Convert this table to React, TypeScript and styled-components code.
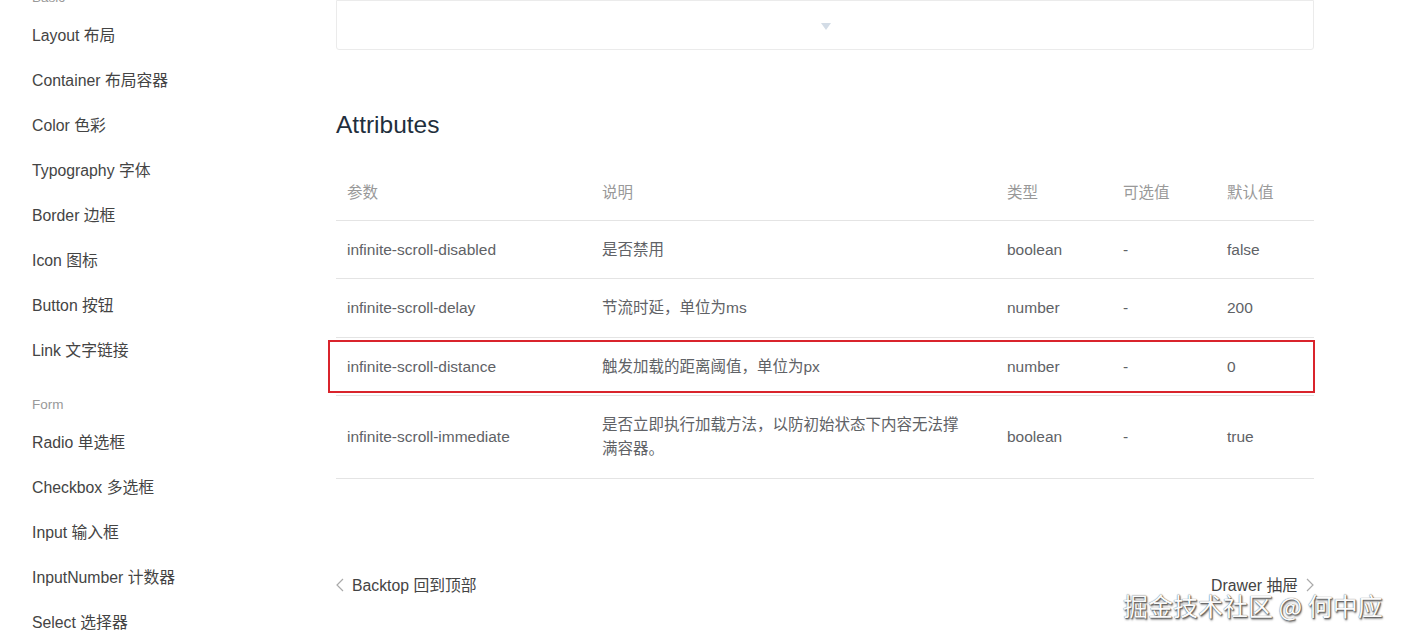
import React from "react";
import styled, { createGlobalStyle } from "styled-components";

const Global = createGlobalStyle`
  html, body { margin: 0; padding: 0; background: #fff; }
  body {
    font-family: "Liberation Sans", Arial, "Noto Sans CJK SC", sans-serif;
    overflow: hidden;
  }
  #root { height: 638px; overflow: hidden; }
`;

const Page = styled.div`
  display: flex;
  height: 638px;
  overflow: hidden;
  position: relative;
`;

const Sidebar = styled.nav`
  width: 336px;
  flex: 0 0 336px;
  padding-left: 32px;
  box-sizing: border-box;
  margin-top: -17px;
`;

const GroupTitle = styled.div<{ $gap?: number }>`
  height: 30px;
  line-height: 30px;
  font-size: 13.5px;
  color: #999;
  margin-top: ${(p) => p.$gap ?? 0}px;
`;

const NavItem = styled.div`
  height: 45px;
  line-height: 45px;
  font-size: 15.8px;
  color: #444;
  white-space: nowrap;
`;

const Main = styled.main`
  width: 978px;
  flex: 0 0 978px;
  display: flex;
  flex-direction: column;
`;

const DemoControl = styled.div`
  height: 48px;
  border: 1px solid #ebebeb;
  border-radius: 0 0 3px 3px;
  display: flex;
  align-items: center;
  justify-content: center;
  background: #fff;
`;

const Caret = styled.span`
  width: 0;
  height: 0;
  border-left: 5px solid transparent;
  border-right: 5px solid transparent;
  border-top: 7px solid #d3dce6;
  margin-left: 2px;
  margin-top: 2px;
`;

const Heading = styled.h3`
  margin: 58px 0 20px;
  height: 34px;
  line-height: 34px;
  font-size: 24.5px;
  font-weight: 400;
  color: #1f2f3d;
`;

const TableWrap = styled.div`
  position: relative;
`;

const Table = styled.table`
  width: 978px;
  border-collapse: collapse;
  table-layout: fixed;
  font-size: 15.5px;
`;

const Th = styled.th<{ $w: number }>`
  width: ${(p) => p.$w}px;
  height: 58px;
  padding: 0 11px;
  text-align: left;
  font-weight: 400;
  color: #999;
  border-bottom: 1px solid #e4e4e4;
  box-sizing: border-box;
`;

const Td = styled.td`
  padding: 17px 11px 16.5px;
  line-height: 24px;
  color: #606266;
  border-bottom: 1px solid #e4e4e4;
  vertical-align: middle;
`;

const DescText = styled.div`
  max-width: 364px;
`;

const Highlight = styled.div`
  position: absolute;
  left: -8px;
  top: 178px;
  width: 987px;
  height: 53px;
  border: 2px solid #d9242c;
  box-sizing: border-box;
  pointer-events: none;
`;

const PageNav = styled.div`
  margin-top: 94px;
  display: flex;
  justify-content: space-between;
  align-items: center;
  height: 24px;
  font-size: 15.8px;
  color: #444;
`;

const NavLink = styled.span`
  display: flex;
  align-items: center;
  gap: 8px;
`;

const Chevron = styled.svg`
  width: 8px;
  height: 14px;
  color: #aaa;
`;

const Watermark = styled.div`
  position: absolute;
  left: 1123px;
  top: 588px;
  font-size: 25px;
  line-height: 34px;
  font-family: "Noto Sans CJK SC", sans-serif;
  color: #fbfbfb;
  white-space: nowrap;
  text-shadow: 0 0 1px #444, 1px 1px 1px #666, 1px 2px 2px #999;
`;

const basic = [
  "Layout 布局",
  "Container 布局容器",
  "Color 色彩",
  "Typography 字体",
  "Border 边框",
  "Icon 图标",
  "Button 按钮",
  "Link 文字链接",
];
const form = ["Radio 单选框", "Checkbox 多选框", "Input 输入框", "InputNumber 计数器", "Select 选择器"];

const cols = [
  { t: "参数", w: 255 },
  { t: "说明", w: 405 },
  { t: "类型", w: 116 },
  { t: "可选值", w: 104 },
  { t: "默认值", w: 98 },
];

const rows = [
  ["infinite-scroll-disabled", "是否禁用", "boolean", "-", "false"],
  ["infinite-scroll-delay", "节流时延，单位为ms", "number", "-", "200"],
  ["infinite-scroll-distance", "触发加载的距离阈值，单位为px", "number", "-", "0"],
  ["infinite-scroll-immediate", "是否立即执行加载方法，以防初始状态下内容无法撑满容器。", "boolean", "-", "true"],
];

export default function App() {
  return (
    <>
      <Global />
      <Page>
        <Sidebar>
          <GroupTitle>Basic</GroupTitle>
          {basic.map((b) => (
            <NavItem key={b}>{b}</NavItem>
          ))}
          <GroupTitle $gap={17}>Form</GroupTitle>
          {form.map((b) => (
            <NavItem key={b}>{b}</NavItem>
          ))}
        </Sidebar>
        <Main>
          <DemoControl>
            <Caret />
          </DemoControl>
          <Heading>Attributes</Heading>
          <TableWrap>
            <Table>
              <thead>
                <tr>
                  {cols.map((c) => (
                    <Th key={c.t} $w={c.w}>
                      {c.t}
                    </Th>
                  ))}
                </tr>
              </thead>
              <tbody>
                {rows.map((r) => (
                  <tr key={r[0]}>
                    <Td>{r[0]}</Td>
                    <Td>
                      <DescText>{r[1]}</DescText>
                    </Td>
                    <Td>{r[2]}</Td>
                    <Td>{r[3]}</Td>
                    <Td>{r[4]}</Td>
                  </tr>
                ))}
              </tbody>
            </Table>
            <Highlight />
          </TableWrap>
          <PageNav>
            <NavLink>
              <Chevron viewBox="0 0 8 14" fill="none" stroke="currentColor" strokeWidth="1.2">
                <path d="M7 1 L1 7 L7 13" />
              </Chevron>
              Backtop 回到顶部
            </NavLink>
            <NavLink>
              Drawer 抽屉
              <Chevron viewBox="0 0 8 14" fill="none" stroke="currentColor" strokeWidth="1.2">
                <path d="M1 1 L7 7 L1 13" />
              </Chevron>
            </NavLink>
          </PageNav>
        </Main>
        <Watermark>掘金技术社区 @ 何中应</Watermark>
      </Page>
    </>
  );
}
